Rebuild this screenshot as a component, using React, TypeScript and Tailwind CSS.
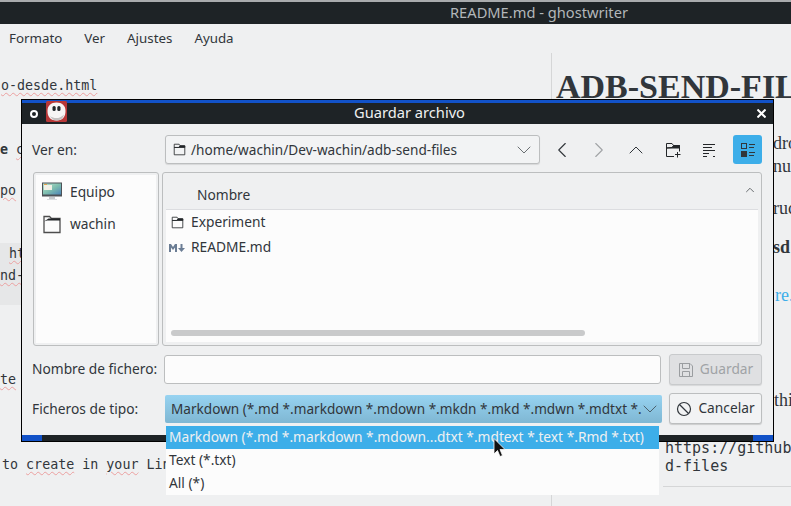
import { ChevronDown, ChevronLeft, ChevronRight, ChevronUp } from "lucide-react";

const uiFont = "font-['Noto_Sans',sans-serif]";
const monoFont = "font-['DejaVu_Sans_Mono',monospace]";
const squiggle = "underline decoration-wavy decoration-[#eba0a0] decoration-1 underline-offset-[2px]";

function FolderIcon({ className = "" }: { className?: string }) {
  return (
    <svg className={className} viewBox="0 0 16 16" fill="none" stroke="#232629" strokeWidth="1">
      <path d="M1.5 14.5V1.5H7.5L9 3.5H14.5V14.5Z" />
      <path d="M1.5 5.5H7L8.5 3.5H14.5V5.5H1.5Z" fill="#232629" />
    </svg>
  );
}

function GhostLogo() {
  return (
    <svg className="h-[21px] w-[21px]" viewBox="0 0 21 21">
      <rect width="21" height="21" rx="1.5" fill="#b83838" />
      <path d="M10.5 1.5C16 1.5 19.5 4.5 19.5 10C19.5 16.5 16 19.5 10.5 19.5C5 19.5 1.5 16.5 1.5 10C1.5 4.5 5 1.5 10.5 1.5Z" fill="#f7f5f5" />
      <path d="M4 15C8 18 14 18 18 13.5C17 18 13.5 19.5 10.5 19.5C7.5 19.5 5.5 17.5 4 15Z" fill="#c4c0c0" />
      <rect x="6.5" y="5" width="3.2" height="5" rx="1.5" fill="#22262a" />
      <rect x="11.3" y="5" width="3.2" height="5" rx="1.5" fill="#22262a" />
    </svg>
  );
}

function MonitorIcon() {
  return (
    <svg className="h-[20px] w-[20px]" viewBox="0 0 20 20">
      <defs>
        <linearGradient id="screen" x1="0" y1="0" x2="1" y2="1">
          <stop offset="0" stopColor="#b9e0cf" />
          <stop offset="0.5" stopColor="#7fbfae" />
          <stop offset="1" stopColor="#4d86b8" />
        </linearGradient>
      </defs>
      <rect x="0" y="0.5" width="20" height="14" fill="#4d5257" />
      <rect x="1" y="1.5" width="18" height="11" fill="url(#screen)" />
      <rect x="2" y="3" width="8" height="5" fill="#f1f1e6" />
      <rect x="2" y="2" width="3" height="1" fill="#e4a64d" />
      <rect x="7" y="15" width="6" height="2" fill="#c4c8cc" />
      <rect x="5" y="17" width="10" height="1" fill="#d9dcde" />
    </svg>
  );
}

function HomeFolderIcon() {
  return (
    <svg className="h-[20px] w-[20px]" viewBox="0 0 20 20" fill="none" stroke="#4d4d4d" strokeWidth="1.3">
      <path d="M2 18.5V2.5H7.5L9.5 4.5H18V18.5Z" />
      <path d="M2 7.5L6.5 4.5H18V6.5H5Z" fill="#232629" stroke="none" />
    </svg>
  );
}

function MarkdownIcon() {
  return (
    <svg className="h-[10px] w-[16px]" viewBox="0 0 16 10" fill="#6b7d94">
      <path d="M0 1H2L4 4L6 1H8V9H6V4.5L4 7L2 4.5V9H0Z" />
      <path d="M11.5 1H13.5V5H16L12.5 9L9 5H11.5Z" />
    </svg>
  );
}

function NewFolderIcon() {
  return (
    <svg className="h-[16px] w-[16px]" viewBox="0 0 16 16" fill="none" stroke="#232629" strokeWidth="1">
      <path d="M9 14.5H1.5V1.5H7L8.5 3.5H14.5V9.5" />
      <path d="M1.5 6L7 5.5L8.5 3.5H14.5V6Z" fill="#232629" />
      <path d="M12.5 10V15.5M10 12.5H15.5" />
    </svg>
  );
}

function SortIcon() {
  return (
    <svg className="h-[16px] w-[16px]" viewBox="0 0 16 16" stroke="#232629" strokeWidth="1">
      <path d="M1 2.5H13M1 5.5H10M1 8.5H13M1 11.5H7M1 14.5H5M11 14.5H13" />
    </svg>
  );
}

function DetailViewIcon() {
  return (
    <svg className="h-[16px] w-[16px]" viewBox="0 0 16 16" fill="none" stroke="#31363b" strokeWidth="1">
      <rect x="1.5" y="1.5" width="5" height="5" />
      <rect x="1" y="9" width="6" height="6" fill="#31363b" stroke="none" />
      <path d="M9 2.5H15M9 5.5H14M9 10.5H15M9 13.5H14" />
    </svg>
  );
}

function SaveIcon() {
  return (
    <svg className="h-[16px] w-[16px]" viewBox="0 0 16 16" fill="none" stroke="#9a9da0" strokeWidth="1">
      <path d="M1.5 1.5H12L14.5 4V14.5H1.5Z" />
      <path d="M4.5 1.5V6.5H11.5V1.5M4.5 14.5V9.5H11.5V14.5" />
    </svg>
  );
}

function CancelIcon() {
  return (
    <svg className="h-[16px] w-[16px]" viewBox="0 0 16 16" fill="none" stroke="#31363b" strokeWidth="1.2">
      <circle cx="8" cy="8" r="6.5" />
      <path d="M3.5 3.5L12.5 12.5" />
    </svg>
  );
}

function MouseCursor() {
  return (
    <svg className="absolute left-[493px] top-[438px] h-[20px] w-[13px]" viewBox="0 0 13 20">
      <path d="M1 0.5V16L4.5 12.5L7 18.5L9.5 17.5L7 11.5H12Z" fill="#111" stroke="#fff" strokeWidth="0.8" />
    </svg>
  );
}

function EditorPanes() {
  return (
    <div className="flex h-[453px] bg-[#eff0f1] text-[#31363b]">
      <div className={`w-[551px] shrink-0 overflow-hidden pt-[23px] text-[13.33px] leading-[20px] ${monoFont}`}>
        <p className="h-5 pl-px"><span className={squiggle}>o-desde.html</span></p>
        <p className="mt-[44px] h-5 font-bold">e <span className={`font-normal ${squiggle}`}>c</span></p>
        <p className="mt-[21px] h-5"><span className={squiggle}>po</span></p>
        <div className="mt-[42px] h-[62px] bg-[#e6e7e8] pt-px">
          <p className="h-5 pl-[9px]"><span className={squiggle}>ht</span></p>
          <p className="mt-[2px] h-5"><span className={squiggle}>nd-</span></p>
        </div>
        <p className="mt-[65px] h-5"><span className={squiggle}>te</span></p>
        <p className="mt-[65px] h-5 pl-[2px] whitespace-nowrap">
          to <span className={squiggle}>create</span> in <span className={squiggle}>your</span> Lin
        </p>
      </div>
      <div className="min-w-0 flex-1 overflow-hidden border-l border-[#d5d6d7] pt-[14px] font-['Liberation_Serif',serif] text-[18px] leading-[22px]">
        <h1 className="h-10 pl-[4px] text-[34px] font-bold leading-[40px] whitespace-nowrap text-[#31363b]">
          ADB-SEND-FILES
        </h1>
        <p className="mt-[25px] pl-[221px]">dro</p>
        <p className="mt-px pl-[221px]">nun</p>
        <p className="mt-[20px] pl-[221px]">ruc</p>
        <p className="mt-[17px] pl-[221px] font-bold">sd</p>
        <p className="mt-[26px] pl-[223px] text-[#3daee9]">re.l</p>
        <p className="mt-[83px] pl-[222px]">thi</p>
        <div className="mt-[28px] ml-[111px] h-[48px] border-b border-[#d5d6d7] pl-[2px] font-['DejaVu_Sans_Mono',monospace] text-[15px] leading-[18px]">
          <p className="whitespace-nowrap">https://github</p>
          <p>d-files</p>
        </div>
      </div>
    </div>
  );
}

function SaveDialog() {
  return (
    <div className={`absolute left-[21px] top-[99px] flex h-[343px] w-[753px] flex-col border border-black bg-[#eff0f1] text-[13.75px] text-[#31363b] ${uiFont}`}>
      <div className="h-[3px] bg-[#1252c8]" />
      <div className="flex h-[21px] items-center bg-[#1e2326] text-[#eff0f1]">
        <div className="ml-[8px] h-[8px] w-[8px] rounded-full border-2 border-white" />
        <div className="ml-[8px] -mt-[5px]"><GhostLogo /></div>
        <span className="ml-[287px] -mt-[3px] text-[14.67px]">Guardar archivo</span>
        <svg className="ml-auto mr-[7px] h-[9px] w-[9px]" viewBox="0 0 9 9" stroke="#fff" strokeWidth="2">
          <path d="M0.5 0.5L8.5 8.5M8.5 0.5L0.5 8.5" />
        </svg>
      </div>

      <div className="flex min-h-0 flex-1 flex-col px-[10px] pr-[11px] pt-[11px]">
        <div className="flex h-[29px] items-center">
          <span className="w-[133px] shrink-0 pt-px">Ver en:</span>
          <div className="flex h-[29px] w-[375px] shrink-0 items-center rounded-[3px] border border-[#bcbebf] bg-[#f2f3f4] pl-[7px] pr-[3px] text-[13.6px] shadow-[0_1px_1px_rgba(0,0,0,0.1)]">
            <FolderIcon className="h-[13px] w-[13px]" />
            <span className="ml-[5px] pt-px">/home/wachin/Dev-wachin/adb-send-files</span>
            <ChevronDown className="ml-auto h-[24px] w-[24px]" strokeWidth={0.7} />
          </div>
          <div className="ml-[11px] flex w-[22px] shrink-0 justify-center"><ChevronLeft className="h-[26px] w-[26px] shrink-0" strokeWidth={1} /></div>
          <div className="ml-[15px] flex w-[22px] shrink-0 justify-center"><ChevronRight className="h-[26px] w-[26px] shrink-0 text-[#a0a3a6]" strokeWidth={1} /></div>
          <div className="ml-[15px] flex w-[22px] shrink-0 justify-center"><ChevronUp className="h-[24px] w-[24px] shrink-0" strokeWidth={1} /></div>
          <div className="ml-[15px] flex w-[22px] shrink-0 justify-center"><NewFolderIcon /></div>
          <div className="ml-[15px] flex w-[22px] shrink-0 justify-center"><SortIcon /></div>
          <div className="ml-[12px] flex h-[29px] w-[29px] shrink-0 items-center justify-center rounded-[3px] bg-[#3daee9]"><DetailViewIcon /></div>
        </div>

        <div className="mt-[8px] flex h-[174px] pl-px">
          <div className="w-[126px] rounded-[3px] border border-[#bcbebf] px-[2px] py-[2px]">
            <div className="h-full bg-[#fcfcfc] pt-[1px] pl-[6px]">
              <div className="flex h-[32px] items-center gap-[8px]"><MonitorIcon /><span>Equipo</span></div>
              <div className="flex h-[32px] items-center gap-[8px]"><HomeFolderIcon /><span>wachin</span></div>
            </div>
          </div>
          <div className="ml-[3px] flex min-w-0 flex-1 flex-col rounded-[3px] border border-[#bcbebf] px-[3px] pb-[3px]">
            <div className="flex h-[37px] shrink-0 items-center justify-between border-b border-[#dcdde0] pl-[31px] pr-[1px]">
              <span className="mt-[8px]">Nombre</span>
              <ChevronUp className="mt-[-2px] h-[14px] w-[14px] text-[#55595d]" strokeWidth={1.5} />
            </div>
            <div className="relative min-h-0 flex-1 bg-[#fcfcfc] pl-[3px]">
              <div className="flex h-[25px] items-center"><FolderIcon className="h-[13px] w-[13px] ml-[2px]" /><span className="ml-[7px]">Experiment</span></div>
              <div className="flex h-[25px] items-center"><MarkdownIcon /><span className="ml-[6px]">README.md</span></div>
              <div className="absolute bottom-[6px] left-[5px] h-[6px] w-[414px] rounded-full bg-[#c9cacb]" />
            </div>
          </div>
        </div>

        <div className="mt-[8px] flex h-[31px] items-center">
          <span className="w-[132px] shrink-0">Nombre de fichero:</span>
          <div className="h-[29px] w-[497px] shrink-0 rounded-[3px] border border-[#bcbebf] bg-[#fcfcfc]" />
          <div className="ml-[8px] flex h-[31px] w-[93px] shrink-0 items-center justify-center gap-[6px] rounded-[3px] border border-[#c8cacc] bg-[#dfe0e2] text-[#a0a3a6] shadow-[0_1px_1px_rgba(0,0,0,0.1)]">
            <SaveIcon /><span>Guardar</span>
          </div>
        </div>

        <div className="mt-[8px] flex h-[31px] items-center">
          <span className="w-[133px] shrink-0 pt-px">Ficheros de tipo:</span>
          <div className="flex h-[28px] w-[497px] shrink-0 items-center rounded-[2px] bg-gradient-to-b from-[#97d3f1] to-[#7fb7d3] pl-[6px] text-[13.6px] whitespace-nowrap">
            <span className="-mr-[10px] w-[477px] shrink-0 overflow-hidden pt-px">Markdown (*.md *.markdown *.mdown *.mkdn *.mkd *.mdwn *.mdtxt *.</span>
            <ChevronDown className="ml-auto h-[24px] w-[24px] shrink-0" strokeWidth={0.7} />
          </div>
          <div className="ml-[7px] flex h-[31px] w-[93px] shrink-0 items-center justify-center gap-[6px] rounded-[3px] border border-[#bcbebf] bg-[#f2f3f4] shadow-[0_1px_1px_rgba(0,0,0,0.15)]">
            <CancelIcon /><span>Cancelar</span>
          </div>
        </div>
      </div>

      <div className="flex h-[6px] justify-between bg-[#1e2326]">
        <div className="w-[20px] bg-[#1252c8]" />
        <div className="w-[20px] bg-[#1252c8]" />
      </div>
    </div>
  );
}

function TypePopup() {
  return (
    <div className={`absolute left-[166px] top-[426px] w-[493px] bg-[#fcfcfc] text-[13.75px] leading-[22px] text-[#31363b] ${uiFont}`}>
      <div className="h-[23px] bg-[#3daee9] pl-[3px] text-[#eff0f1] whitespace-nowrap">
        Markdown (*.md *.markdown *.mdown...dtxt *.mdtext *.text *.Rmd *.txt)
      </div>
      <div className="h-[23px] pl-[3px]">Text (*.txt)</div>
      <div className="h-[23px] pl-[3px]">All (*)</div>
    </div>
  );
}

export default function App() {
  return (
    <div className="relative h-[506px] w-[791px] overflow-hidden bg-[#eff0f1]">
      <div className="h-[2px] bg-[#a9abad]" />
      <div className={`flex h-[22px] items-center bg-[#1e2326] pb-[2px] pl-[450px] text-[14.67px] text-[#b3b7ba] ${uiFont}`}>
        README.md - ghostwriter
      </div>
      <div className={`flex h-[29px] items-center gap-[22px] pl-[9px] text-[13.33px] text-[#31363b] ${uiFont}`}>
        <span>Formato</span>
        <span>Ver</span>
        <span>Ajustes</span>
        <span>Ayuda</span>
      </div>
      <EditorPanes />
      <SaveDialog />
      <TypePopup />
      <MouseCursor />
    </div>
  );
}
